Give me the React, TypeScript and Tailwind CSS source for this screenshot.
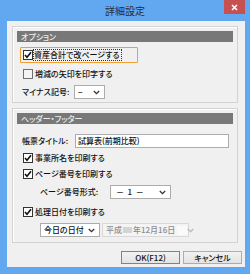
import React from "react";

const Check = ({ checked }: { checked: boolean }) => (
  <div
    className={
      "w-[10px] h-[10px] shrink-0 border flex items-center justify-center " +
      (checked ? "border-[#333333] bg-white" : "border-[#707070] bg-[#f4f4f4]")
    }
  >
    {checked && (
      <svg width="8" height="8" viewBox="0 0 8 8">
        <path d="M1 4 L3 6.2 L7 1.2" stroke="#111" strokeWidth="1.6" fill="none" />
      </svg>
    )}
  </div>
);

const Chevron = ({ color = "#333" }: { color?: string }) => (
  <svg width="7" height="5" viewBox="0 0 7 5" className="shrink-0">
    <path d="M0.8 1 L3.5 3.7 L6.2 1" stroke={color} strokeWidth="1.3" fill="none" />
  </svg>
);

const Select = ({ w, text, disabled }: { w: string; text: React.ReactNode; disabled?: boolean }) => (
  <div
    className={
      "h-[14px] border flex items-center justify-between pl-[3px] pr-[4px] leading-none " +
      w +
      (disabled ? " border-[#d9d9d9] bg-[#f4f4f4] text-[#8d8d8d]" : " border-[#acacac] bg-white text-[#111]")
    }
  >
    <span className="flex items-center whitespace-nowrap">{text}</span>
    <Chevron color={disabled ? "#b8b8b8" : "#333"} />
  </div>
);

const Group = ({ title, h, children }: { title: string; h: string; children: React.ReactNode }) => (
  <div className={"w-[226px] border border-[#d3d3d3] shadow-[inset_1px_1px_0_#ffffff] px-[4px] pt-[4px] flex flex-col " + h}>
    <div className="h-[11px] bg-[#787878] text-[#ededed] text-[8px] leading-none pl-[4px] flex items-center">{title}</div>
    {children}
  </div>
);

export default function App() {
  return (
    <div
      className="w-[250px] h-[274px] bg-[#62a8f1] flex flex-col relative text-[8px] font-medium text-[#111] [font-feature-settings:'palt']"
      style={{ fontFamily: '"Noto Sans CJK JP", "Noto Sans", sans-serif' }}
    >
      <div className="h-[21px] flex items-center justify-center text-[10px] font-normal text-[#2b2b2b] leading-none pt-[1px]">
        詳細設定
      </div>
      <div className="absolute top-0 right-[5px] w-[21px] h-[14px] bg-[#c75050] flex items-center justify-center">
        <svg width="7" height="7" viewBox="0 0 7 7">
          <path d="M1 1 L6 6 M6 1 L1 6" stroke="#fff" strokeWidth="1.6" />
        </svg>
      </div>
      <div className="ml-[7px] mr-[5px] h-[246px] bg-[#f0f0f0] pl-[5px] pt-[5px] flex flex-col">
        <Group title="オプション" h="h-[77px]">
          <div className="mt-[5px] ml-[3px] w-[118px] h-[16px] border border-[#f0a030] rounded-[1px] flex items-center pl-[2px]">
            <Check checked />
            <span className="ml-[1px] outline-1 outline-dotted outline-[#333] leading-none py-[1px] pr-[1px] whitespace-nowrap">
              資産合計で改ページする
            </span>
          </div>
          <div className="mt-[6px] ml-[6px] h-[10px] flex items-center">
            <Check checked={false} />
            <span className="ml-[2px] leading-none whitespace-nowrap">増減の矢印を印字する</span>
          </div>
          <div className="mt-[6px] ml-[5px] h-[14px] flex items-center">
            <span className="w-[52px] leading-none whitespace-nowrap">マイナス記号:</span>
            <Select w="w-[31px]" text="−" />
          </div>
        </Group>
        <div className="mt-[5px]">
          <Group title="ヘッダー・フッター" h="h-[135px]">
            <div className="mt-[10px] ml-[5px] h-[14px] flex items-center">
              <span className="w-[53px] leading-none whitespace-nowrap">帳票タイトル:</span>
              <div className="w-[154px] h-[14px] border border-[#abadb3] bg-white flex items-center pl-[2px] leading-none whitespace-nowrap">
                試算表(前期比較)
              </div>
            </div>
            <div className="mt-[5px] ml-[6px] h-[10px] flex items-center">
              <Check checked />
              <span className="ml-[2px] leading-none whitespace-nowrap">事業所名を印刷する</span>
            </div>
            <div className="mt-[6px] ml-[6px] h-[10px] flex items-center">
              <Check checked />
              <span className="ml-[2px] leading-none whitespace-nowrap">ページ番号を印刷する</span>
            </div>
            <div className="mt-[6px] ml-[23px] h-[14px] flex items-center">
              <span className="w-[70px] leading-none whitespace-nowrap">ページ番号形式:</span>
              <Select w="w-[61px]" text={<span className="pl-[2px]">－&nbsp;&nbsp;1&nbsp;&nbsp;－</span>} />
            </div>
            <div className="mt-[8px] ml-[6px] h-[10px] flex items-center">
              <Check checked />
              <span className="ml-[2px] leading-none whitespace-nowrap">処理日付を印刷する</span>
            </div>
            <div className="mt-[6px] ml-[23px] h-[14px] flex items-center gap-[2px]">
              <Select w="w-[60px]" text="今日の日付" />
              <Select
                w="w-[87px]"
                disabled
                text={
                  <>
                    平成<span className="inline-block w-[9px] h-[6px] bg-[#d4d4d4] mx-[1px]" />年12月16日
                    <span className="inline-block w-[10px] h-[9px] bg-[#fafafa] ml-[2px]" />
                  </>
                }
              />
            </div>
          </Group>
        </div>
        <div className="mt-[8px] pr-[3px] flex justify-end gap-[3px]">
          <div className="w-[59px] h-[13px] border border-[#4a90d0] bg-gradient-to-b from-[#f2f2f2] to-[#e3e3e3] flex items-center justify-center text-[8px] leading-none">
            OK(F12)
          </div>
          <div className="w-[59px] h-[13px] border border-[#adadad] bg-gradient-to-b from-[#f2f2f2] to-[#e3e3e3] flex items-center justify-center text-[8px] leading-none">
            キャンセル
          </div>
        </div>
      </div>
    </div>
  );
}
